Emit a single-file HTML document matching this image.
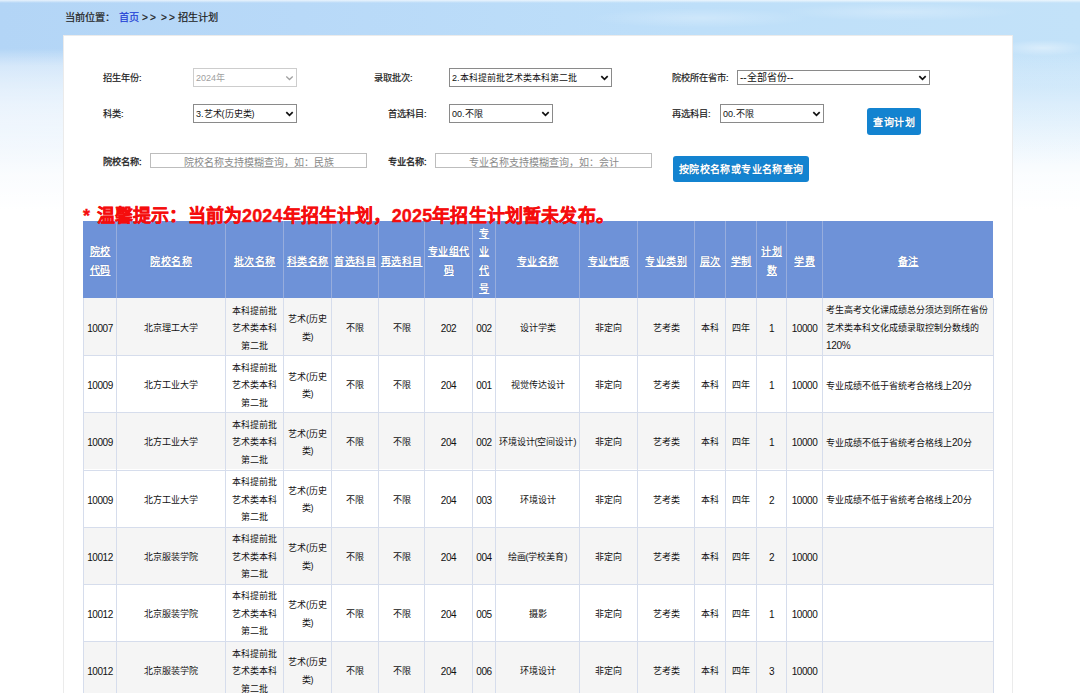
<!DOCTYPE html>
<html lang="zh-CN">
<head>
<meta charset="utf-8">
<style>
*{box-sizing:border-box;margin:0;padding:0}
html,body{width:1080px;height:693px;overflow:hidden}
body{position:relative;font-family:"Liberation Sans",sans-serif;color:#222;background:#fff}
#bg{position:absolute;left:0;top:0;width:1080px;height:693px;
 background:
 radial-gradient(ellipse 110px 10px at 700px 18px,rgba(255,255,255,.25),rgba(255,255,255,0)),
 radial-gradient(ellipse 120px 9px at 900px 12px,rgba(255,255,255,.25),rgba(255,255,255,0)),
 linear-gradient(to bottom,rgba(255,255,255,.7) 0px,rgba(255,255,255,0) 3px),
 linear-gradient(to right,#b3d5f6 0px,#b8d9f8 300px,#bedff9 700px,#c3e2f9 1080px)}
#bgb{position:absolute;left:0;top:0;width:1080px;height:693px;
 background:linear-gradient(to bottom,rgba(255,255,255,0) 50px,rgba(255,255,255,.3) 78px,rgba(255,255,255,.55) 105px,rgba(255,255,255,.75) 140px,rgba(255,255,255,.93) 175px,#fff 210px)}
#bgr{position:absolute;left:1013px;top:0;width:67px;height:300px;
 background:radial-gradient(ellipse 45px 8px at 30px 48px,rgba(255,255,255,.4),rgba(255,255,255,0)),
 linear-gradient(to bottom,rgba(195,226,249,0) 50px,rgba(195,226,249,.35) 85px,rgba(195,226,249,.12) 130px,rgba(195,226,249,0) 165px)}
#bgl{position:absolute;left:0;top:0;width:64px;height:300px;background:linear-gradient(to bottom,rgba(255,255,255,0) 48px,rgba(255,255,255,.35) 66px,rgba(255,255,255,.4) 90px,rgba(255,255,255,.4) 120px,rgba(255,255,255,0) 200px)}
#crumb span,#crumb a{position:absolute;top:10.5px;font-size:10.2px;line-height:14px;color:#222;white-space:nowrap;-webkit-text-stroke:0.2px currentColor}
#crumb a{color:#1f3fd6;text-decoration:none}
#panel{position:absolute;left:63px;top:35px;width:950px;height:700px;background:#fff;border:1px solid #ebebeb}
.lbl{position:absolute;font-size:9.2px;line-height:12px;color:#222;white-space:nowrap;-webkit-text-stroke:0.2px #222}
.sel{position:absolute;height:19px;border:1px solid #8a8a8a;border-radius:0;background:#fff;font-size:9px;line-height:19px;padding-left:2px;color:#111;white-space:nowrap}
.sel svg{position:absolute;right:2.5px;top:5.5px}
.sel.dis{border-color:#cdcdcd;color:#a0a0a0}
.inp{position:absolute;height:15px;border:1px solid #bdbdbd;background:#fff;font-size:10px;line-height:13px;padding-top:1.6px;color:#8a8a8a;text-align:center;white-space:nowrap}
.btn{position:absolute;background:#1383d0;color:#fff;font-weight:bold;border-radius:3px;font-size:10.5px;text-align:center;white-space:nowrap;text-shadow:0 0 1px rgba(0,40,90,.35)}
#tip{position:absolute;z-index:5;left:83px;top:203.7px;font-size:18px;letter-spacing:0.16px;word-spacing:1.4px;line-height:24px;font-weight:bold;color:#f50d0d;white-space:nowrap;-webkit-text-stroke:0.35px #f50d0d}
.hbg{position:absolute;background:#6e92d8}
.rbg{position:absolute}
.th,.td{position:absolute;display:flex;align-items:center;justify-content:center;text-align:center}
.th span{font-size:10px;line-height:18.3px;font-weight:bold;color:#fff;text-decoration:underline;position:relative;top:2.2px;letter-spacing:0.5px;margin-right:-0.5px;text-shadow:0 0 1px rgba(40,60,110,.6)}
.td span{font-size:9px;line-height:17.5px;color:#111;position:relative;top:2.3px;}
.td span.n{font-size:10px;letter-spacing:-0.45px}
.td i.d{font-style:normal;font-size:10px;letter-spacing:-0.3px}
.td.rem{justify-content:flex-start;text-align:left;padding-left:3px}
.vl{position:absolute;width:1px;background:#d6ddec}
.vlh{position:absolute;width:1px;background:#97addd}
.hl{position:absolute;height:1px;background:#d6ddec}
</style>
</head>
<body>
<div id="bg"></div><div id="bgb"></div><div id="bgl"></div><div id="bgr"></div>
<div id="crumb"><span style="left:65px">当前位置：</span><a style="left:118.5px">首页</a><span style="left:142px;letter-spacing:2px">&gt;&gt;</span><span style="left:161px;letter-spacing:2px">&gt;&gt;</span><span style="left:178px">招生计划</span></div>
<div id="panel"></div>

<div class="lbl" style="left:103px;top:72px">招生年份:</div>
<div class="sel dis" style="left:193px;top:68px;width:104px">2024年<svg width="9" height="6" viewBox="0 0 9 6"><path d="M1.3 1.5L4.5 4.5L7.7 1.5" stroke="#a0a0a0" stroke-width="1.3" fill="none"/></svg></div>
<div class="lbl" style="left:374px;top:72px">录取批次:</div>
<div class="sel" style="left:449px;top:68px;width:163px">2.本科提前批艺术类本科第二批<svg width="9" height="6" viewBox="0 0 9 6"><path d="M1.3 1.2L4.5 4.4L7.7 1.2" stroke="#111" stroke-width="1.7" fill="none"/></svg></div>
<div class="lbl" style="left:672px;top:72px">院校所在省市:</div>
<div class="sel" style="left:737px;top:70px;width:193px;height:15px;line-height:14px;font-size:10px">--全部省份--<svg width="9" height="6" viewBox="0 0 9 6" style="top:3.5px"><path d="M1.3 1.2L4.5 4.4L7.7 1.2" stroke="#111" stroke-width="1.7" fill="none"/></svg></div>

<div class="lbl" style="left:103px;top:108px">科类:</div>
<div class="sel" style="left:193px;top:104px;width:104px">3.艺术(历史类)<svg width="9" height="6" viewBox="0 0 9 6"><path d="M1.3 1.2L4.5 4.4L7.7 1.2" stroke="#111" stroke-width="1.7" fill="none"/></svg></div>
<div class="lbl" style="left:388px;top:108px">首选科目:</div>
<div class="sel" style="left:449px;top:104px;width:104px">00.不限<svg width="9" height="6" viewBox="0 0 9 6"><path d="M1.3 1.2L4.5 4.4L7.7 1.2" stroke="#111" stroke-width="1.7" fill="none"/></svg></div>
<div class="lbl" style="left:672px;top:108px">再选科目:</div>
<div class="sel" style="left:720px;top:104px;width:104px">00.不限<svg width="9" height="6" viewBox="0 0 9 6"><path d="M1.3 1.2L4.5 4.4L7.7 1.2" stroke="#111" stroke-width="1.7" fill="none"/></svg></div>
<div class="btn" style="left:867px;top:107.5px;width:54px;height:27px;line-height:30px;font-size:10px;letter-spacing:0.4px;text-indent:0.4px">查询计划</div>

<div class="lbl" style="left:103px;top:156px;-webkit-text-stroke:0.3px #222">院校名称:</div>
<div class="inp" style="left:150px;top:153px;width:217px">院校名称支持模糊查询，如：民族</div>
<div class="lbl" style="left:388px;top:156px;-webkit-text-stroke:0.3px #222">专业名称:</div>
<div class="inp" style="left:435px;top:153px;width:217px">专业名称支持模糊查询，如：会计</div>
<div class="btn" style="left:673px;top:155.5px;width:136px;height:26px;line-height:27px;font-size:10px;letter-spacing:0.35px;text-indent:0.35px">按院校名称或专业名称查询</div>



<!--T-->
<div class="hbg" style="left:83px;top:221px;width:910px;height:77px"></div>
<div class="rbg" style="left:83px;top:298.00px;width:910px;height:57.17px;background:#f5f5f5"></div>
<div class="rbg" style="left:83px;top:355.17px;width:910px;height:57.17px;background:#fff"></div>
<div class="rbg" style="left:83px;top:412.34px;width:910px;height:57.17px;background:#f5f5f5"></div>
<div class="rbg" style="left:83px;top:469.51px;width:910px;height:57.17px;background:#fff"></div>
<div class="rbg" style="left:83px;top:526.68px;width:910px;height:57.17px;background:#f5f5f5"></div>
<div class="rbg" style="left:83px;top:583.85px;width:910px;height:57.17px;background:#fff"></div>
<div class="rbg" style="left:83px;top:641.02px;width:910px;height:57.17px;background:#f5f5f5"></div>
<div class="th" style="left:84px;top:221px;width:32px;height:77px"><span>院校<br>代码</span></div>
<div class="th" style="left:117px;top:221px;width:108px;height:77px"><span>院校名称</span></div>
<div class="th" style="left:226px;top:221px;width:57px;height:77px"><span>批次名称</span></div>
<div class="th" style="left:284px;top:221px;width:47px;height:77px"><span>科类名称</span></div>
<div class="th" style="left:332px;top:221px;width:46px;height:77px"><span>首选科目</span></div>
<div class="th" style="left:379px;top:221px;width:45px;height:77px"><span>再选科目</span></div>
<div class="th" style="left:425px;top:221px;width:47px;height:77px"><span>专业组代<br>码</span></div>
<div class="th" style="left:473px;top:221px;width:22px;height:77px"><span>专<br>业<br>代<br>号</span></div>
<div class="th" style="left:496px;top:221px;width:83px;height:77px"><span>专业名称</span></div>
<div class="th" style="left:580px;top:221px;width:57px;height:77px"><span>专业性质</span></div>
<div class="th" style="left:638px;top:221px;width:56px;height:77px"><span>专业类别</span></div>
<div class="th" style="left:695px;top:221px;width:30px;height:77px"><span>层次</span></div>
<div class="th" style="left:726px;top:221px;width:30px;height:77px"><span>学制</span></div>
<div class="th" style="left:757px;top:221px;width:29px;height:77px"><span>计划<br>数</span></div>
<div class="th" style="left:787px;top:221px;width:35px;height:77px"><span>学费</span></div>
<div class="th" style="left:823px;top:221px;width:170px;height:77px"><span>备注</span></div>
<div class="td" style="left:84px;top:298.00px;width:32px;height:57.17px"><span class="n">10007</span></div>
<div class="td" style="left:117px;top:298.00px;width:108px;height:57.17px"><span>北京理工大学</span></div>
<div class="td" style="left:226px;top:298.00px;width:57px;height:57.17px"><span>本科提前批<br>艺术类本科<br>第二批</span></div>
<div class="td" style="left:284px;top:298.00px;width:47px;height:57.17px"><span>艺术(历史<br>类)</span></div>
<div class="td" style="left:332px;top:298.00px;width:46px;height:57.17px"><span>不限</span></div>
<div class="td" style="left:379px;top:298.00px;width:45px;height:57.17px"><span>不限</span></div>
<div class="td" style="left:425px;top:298.00px;width:47px;height:57.17px"><span class="n">202</span></div>
<div class="td" style="left:473px;top:298.00px;width:22px;height:57.17px"><span class="n">002</span></div>
<div class="td" style="left:496px;top:298.00px;width:83px;height:57.17px"><span>设计学类</span></div>
<div class="td" style="left:580px;top:298.00px;width:57px;height:57.17px"><span>非定向</span></div>
<div class="td" style="left:638px;top:298.00px;width:56px;height:57.17px"><span>艺考类</span></div>
<div class="td" style="left:695px;top:298.00px;width:30px;height:57.17px"><span>本科</span></div>
<div class="td" style="left:726px;top:298.00px;width:30px;height:57.17px"><span>四年</span></div>
<div class="td" style="left:757px;top:298.00px;width:29px;height:57.17px"><span class="n">1</span></div>
<div class="td" style="left:787px;top:298.00px;width:35px;height:57.17px"><span class="n">10000</span></div>
<div class="td rem" style="left:823px;top:298.00px;width:170px;height:57.17px"><span>考生高考文化课成绩总分须达到所在省份<br>艺术类本科文化成绩录取控制分数线的<br><i class="d">120%</i></span></div>
<div class="td" style="left:84px;top:355.17px;width:32px;height:57.17px"><span class="n">10009</span></div>
<div class="td" style="left:117px;top:355.17px;width:108px;height:57.17px"><span>北方工业大学</span></div>
<div class="td" style="left:226px;top:355.17px;width:57px;height:57.17px"><span>本科提前批<br>艺术类本科<br>第二批</span></div>
<div class="td" style="left:284px;top:355.17px;width:47px;height:57.17px"><span>艺术(历史<br>类)</span></div>
<div class="td" style="left:332px;top:355.17px;width:46px;height:57.17px"><span>不限</span></div>
<div class="td" style="left:379px;top:355.17px;width:45px;height:57.17px"><span>不限</span></div>
<div class="td" style="left:425px;top:355.17px;width:47px;height:57.17px"><span class="n">204</span></div>
<div class="td" style="left:473px;top:355.17px;width:22px;height:57.17px"><span class="n">001</span></div>
<div class="td" style="left:496px;top:355.17px;width:83px;height:57.17px"><span>视觉传达设计</span></div>
<div class="td" style="left:580px;top:355.17px;width:57px;height:57.17px"><span>非定向</span></div>
<div class="td" style="left:638px;top:355.17px;width:56px;height:57.17px"><span>艺考类</span></div>
<div class="td" style="left:695px;top:355.17px;width:30px;height:57.17px"><span>本科</span></div>
<div class="td" style="left:726px;top:355.17px;width:30px;height:57.17px"><span>四年</span></div>
<div class="td" style="left:757px;top:355.17px;width:29px;height:57.17px"><span class="n">1</span></div>
<div class="td" style="left:787px;top:355.17px;width:35px;height:57.17px"><span class="n">10000</span></div>
<div class="td rem" style="left:823px;top:355.17px;width:170px;height:57.17px"><span>专业成绩不低于省统考合格线上<i class="d">20</i>分</span></div>
<div class="td" style="left:84px;top:412.34px;width:32px;height:57.17px"><span class="n">10009</span></div>
<div class="td" style="left:117px;top:412.34px;width:108px;height:57.17px"><span>北方工业大学</span></div>
<div class="td" style="left:226px;top:412.34px;width:57px;height:57.17px"><span>本科提前批<br>艺术类本科<br>第二批</span></div>
<div class="td" style="left:284px;top:412.34px;width:47px;height:57.17px"><span>艺术(历史<br>类)</span></div>
<div class="td" style="left:332px;top:412.34px;width:46px;height:57.17px"><span>不限</span></div>
<div class="td" style="left:379px;top:412.34px;width:45px;height:57.17px"><span>不限</span></div>
<div class="td" style="left:425px;top:412.34px;width:47px;height:57.17px"><span class="n">204</span></div>
<div class="td" style="left:473px;top:412.34px;width:22px;height:57.17px"><span class="n">002</span></div>
<div class="td" style="left:496px;top:412.34px;width:83px;height:57.17px"><span>环境设计(空间设计)</span></div>
<div class="td" style="left:580px;top:412.34px;width:57px;height:57.17px"><span>非定向</span></div>
<div class="td" style="left:638px;top:412.34px;width:56px;height:57.17px"><span>艺考类</span></div>
<div class="td" style="left:695px;top:412.34px;width:30px;height:57.17px"><span>本科</span></div>
<div class="td" style="left:726px;top:412.34px;width:30px;height:57.17px"><span>四年</span></div>
<div class="td" style="left:757px;top:412.34px;width:29px;height:57.17px"><span class="n">1</span></div>
<div class="td" style="left:787px;top:412.34px;width:35px;height:57.17px"><span class="n">10000</span></div>
<div class="td rem" style="left:823px;top:412.34px;width:170px;height:57.17px"><span>专业成绩不低于省统考合格线上<i class="d">20</i>分</span></div>
<div class="td" style="left:84px;top:469.51px;width:32px;height:57.17px"><span class="n">10009</span></div>
<div class="td" style="left:117px;top:469.51px;width:108px;height:57.17px"><span>北方工业大学</span></div>
<div class="td" style="left:226px;top:469.51px;width:57px;height:57.17px"><span>本科提前批<br>艺术类本科<br>第二批</span></div>
<div class="td" style="left:284px;top:469.51px;width:47px;height:57.17px"><span>艺术(历史<br>类)</span></div>
<div class="td" style="left:332px;top:469.51px;width:46px;height:57.17px"><span>不限</span></div>
<div class="td" style="left:379px;top:469.51px;width:45px;height:57.17px"><span>不限</span></div>
<div class="td" style="left:425px;top:469.51px;width:47px;height:57.17px"><span class="n">204</span></div>
<div class="td" style="left:473px;top:469.51px;width:22px;height:57.17px"><span class="n">003</span></div>
<div class="td" style="left:496px;top:469.51px;width:83px;height:57.17px"><span>环境设计</span></div>
<div class="td" style="left:580px;top:469.51px;width:57px;height:57.17px"><span>非定向</span></div>
<div class="td" style="left:638px;top:469.51px;width:56px;height:57.17px"><span>艺考类</span></div>
<div class="td" style="left:695px;top:469.51px;width:30px;height:57.17px"><span>本科</span></div>
<div class="td" style="left:726px;top:469.51px;width:30px;height:57.17px"><span>四年</span></div>
<div class="td" style="left:757px;top:469.51px;width:29px;height:57.17px"><span class="n">2</span></div>
<div class="td" style="left:787px;top:469.51px;width:35px;height:57.17px"><span class="n">10000</span></div>
<div class="td rem" style="left:823px;top:469.51px;width:170px;height:57.17px"><span>专业成绩不低于省统考合格线上<i class="d">20</i>分</span></div>
<div class="td" style="left:84px;top:526.68px;width:32px;height:57.17px"><span class="n">10012</span></div>
<div class="td" style="left:117px;top:526.68px;width:108px;height:57.17px"><span>北京服装学院</span></div>
<div class="td" style="left:226px;top:526.68px;width:57px;height:57.17px"><span>本科提前批<br>艺术类本科<br>第二批</span></div>
<div class="td" style="left:284px;top:526.68px;width:47px;height:57.17px"><span>艺术(历史<br>类)</span></div>
<div class="td" style="left:332px;top:526.68px;width:46px;height:57.17px"><span>不限</span></div>
<div class="td" style="left:379px;top:526.68px;width:45px;height:57.17px"><span>不限</span></div>
<div class="td" style="left:425px;top:526.68px;width:47px;height:57.17px"><span class="n">204</span></div>
<div class="td" style="left:473px;top:526.68px;width:22px;height:57.17px"><span class="n">004</span></div>
<div class="td" style="left:496px;top:526.68px;width:83px;height:57.17px"><span>绘画(学校美育)</span></div>
<div class="td" style="left:580px;top:526.68px;width:57px;height:57.17px"><span>非定向</span></div>
<div class="td" style="left:638px;top:526.68px;width:56px;height:57.17px"><span>艺考类</span></div>
<div class="td" style="left:695px;top:526.68px;width:30px;height:57.17px"><span>本科</span></div>
<div class="td" style="left:726px;top:526.68px;width:30px;height:57.17px"><span>四年</span></div>
<div class="td" style="left:757px;top:526.68px;width:29px;height:57.17px"><span class="n">2</span></div>
<div class="td" style="left:787px;top:526.68px;width:35px;height:57.17px"><span class="n">10000</span></div>
<div class="td" style="left:84px;top:583.85px;width:32px;height:57.17px"><span class="n">10012</span></div>
<div class="td" style="left:117px;top:583.85px;width:108px;height:57.17px"><span>北京服装学院</span></div>
<div class="td" style="left:226px;top:583.85px;width:57px;height:57.17px"><span>本科提前批<br>艺术类本科<br>第二批</span></div>
<div class="td" style="left:284px;top:583.85px;width:47px;height:57.17px"><span>艺术(历史<br>类)</span></div>
<div class="td" style="left:332px;top:583.85px;width:46px;height:57.17px"><span>不限</span></div>
<div class="td" style="left:379px;top:583.85px;width:45px;height:57.17px"><span>不限</span></div>
<div class="td" style="left:425px;top:583.85px;width:47px;height:57.17px"><span class="n">204</span></div>
<div class="td" style="left:473px;top:583.85px;width:22px;height:57.17px"><span class="n">005</span></div>
<div class="td" style="left:496px;top:583.85px;width:83px;height:57.17px"><span>摄影</span></div>
<div class="td" style="left:580px;top:583.85px;width:57px;height:57.17px"><span>非定向</span></div>
<div class="td" style="left:638px;top:583.85px;width:56px;height:57.17px"><span>艺考类</span></div>
<div class="td" style="left:695px;top:583.85px;width:30px;height:57.17px"><span>本科</span></div>
<div class="td" style="left:726px;top:583.85px;width:30px;height:57.17px"><span>四年</span></div>
<div class="td" style="left:757px;top:583.85px;width:29px;height:57.17px"><span class="n">1</span></div>
<div class="td" style="left:787px;top:583.85px;width:35px;height:57.17px"><span class="n">10000</span></div>
<div class="td" style="left:84px;top:641.02px;width:32px;height:57.17px"><span class="n">10012</span></div>
<div class="td" style="left:117px;top:641.02px;width:108px;height:57.17px"><span>北京服装学院</span></div>
<div class="td" style="left:226px;top:641.02px;width:57px;height:57.17px"><span>本科提前批<br>艺术类本科<br>第二批</span></div>
<div class="td" style="left:284px;top:641.02px;width:47px;height:57.17px"><span>艺术(历史<br>类)</span></div>
<div class="td" style="left:332px;top:641.02px;width:46px;height:57.17px"><span>不限</span></div>
<div class="td" style="left:379px;top:641.02px;width:45px;height:57.17px"><span>不限</span></div>
<div class="td" style="left:425px;top:641.02px;width:47px;height:57.17px"><span class="n">204</span></div>
<div class="td" style="left:473px;top:641.02px;width:22px;height:57.17px"><span class="n">006</span></div>
<div class="td" style="left:496px;top:641.02px;width:83px;height:57.17px"><span>环境设计</span></div>
<div class="td" style="left:580px;top:641.02px;width:57px;height:57.17px"><span>非定向</span></div>
<div class="td" style="left:638px;top:641.02px;width:56px;height:57.17px"><span>艺考类</span></div>
<div class="td" style="left:695px;top:641.02px;width:30px;height:57.17px"><span>本科</span></div>
<div class="td" style="left:726px;top:641.02px;width:30px;height:57.17px"><span>四年</span></div>
<div class="td" style="left:757px;top:641.02px;width:29px;height:57.17px"><span class="n">3</span></div>
<div class="td" style="left:787px;top:641.02px;width:35px;height:57.17px"><span class="n">10000</span></div>
<div class="vl" style="left:83px;top:298px;height:395px"></div>
<div class="vl" style="left:116px;top:298px;height:395px"></div>
<div class="vlh" style="left:116px;top:221px;height:77px"></div>
<div class="vl" style="left:225px;top:298px;height:395px"></div>
<div class="vlh" style="left:225px;top:221px;height:77px"></div>
<div class="vl" style="left:283px;top:298px;height:395px"></div>
<div class="vlh" style="left:283px;top:221px;height:77px"></div>
<div class="vl" style="left:331px;top:298px;height:395px"></div>
<div class="vlh" style="left:331px;top:221px;height:77px"></div>
<div class="vl" style="left:378px;top:298px;height:395px"></div>
<div class="vlh" style="left:378px;top:221px;height:77px"></div>
<div class="vl" style="left:424px;top:298px;height:395px"></div>
<div class="vlh" style="left:424px;top:221px;height:77px"></div>
<div class="vl" style="left:472px;top:298px;height:395px"></div>
<div class="vlh" style="left:472px;top:221px;height:77px"></div>
<div class="vl" style="left:495px;top:298px;height:395px"></div>
<div class="vlh" style="left:495px;top:221px;height:77px"></div>
<div class="vl" style="left:579px;top:298px;height:395px"></div>
<div class="vlh" style="left:579px;top:221px;height:77px"></div>
<div class="vl" style="left:637px;top:298px;height:395px"></div>
<div class="vlh" style="left:637px;top:221px;height:77px"></div>
<div class="vl" style="left:694px;top:298px;height:395px"></div>
<div class="vlh" style="left:694px;top:221px;height:77px"></div>
<div class="vl" style="left:725px;top:298px;height:395px"></div>
<div class="vlh" style="left:725px;top:221px;height:77px"></div>
<div class="vl" style="left:756px;top:298px;height:395px"></div>
<div class="vlh" style="left:756px;top:221px;height:77px"></div>
<div class="vl" style="left:786px;top:298px;height:395px"></div>
<div class="vlh" style="left:786px;top:221px;height:77px"></div>
<div class="vl" style="left:822px;top:298px;height:395px"></div>
<div class="vlh" style="left:822px;top:221px;height:77px"></div>
<div class="vl" style="left:993px;top:298px;height:395px"></div>
<div class="hl" style="left:83px;top:355.17px;width:911px"></div>
<div class="hl" style="left:83px;top:412.34px;width:911px"></div>
<div class="hl" style="left:83px;top:469.51px;width:911px"></div>
<div class="hl" style="left:83px;top:526.68px;width:911px"></div>
<div class="hl" style="left:83px;top:583.85px;width:911px"></div>
<div class="hl" style="left:83px;top:641.02px;width:911px"></div>
<div class="hl" style="left:83px;top:698.19px;width:911px"></div>
<!--/T-->
<div id="tip">* 温馨提示：当前为2024年招生计划，2025年招生计划暂未发布。</div>
</body>
</html>
